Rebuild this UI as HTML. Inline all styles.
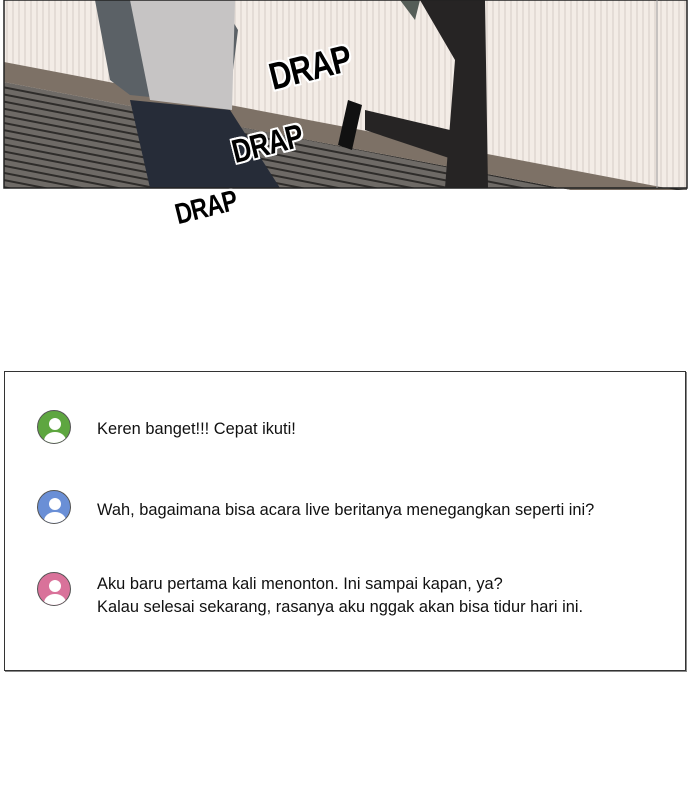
<!DOCTYPE html>
<html><head><meta charset="utf-8"><style>
body{margin:0;width:690px;height:812px;background:#fff;position:relative;overflow:hidden;font-family:"Liberation Sans",sans-serif}
.box{position:absolute;left:4px;top:371px;width:680px;height:298px;border:1.5px solid #333;box-shadow:1px 1px 0 #888}
.av{position:absolute;left:37px;width:34px;height:34px;border-radius:50%;overflow:hidden;border:1px solid #555;box-sizing:border-box}
.t{position:absolute;left:97px;font-size:17px;color:#111;white-space:nowrap;transform-origin:0 0;transform:scaleX(0.965);line-height:23px}
.drap{position:absolute;font-family:"Liberation Sans",sans-serif;font-weight:bold;color:#000;text-shadow:2px 0 #fff,-2px 0 #fff,0 2px #fff,0 -2px #fff,2px 2px #fff,-2px -2px #fff,2px -2px #fff,-2px 2px #fff;transform-origin:0 0;letter-spacing:-1px}
</style></head><body>
<svg style="position:absolute;left:0;top:0" width="690" height="190">
<defs><pattern id="st" width="6" height="10" patternUnits="userSpaceOnUse"><rect width="6" height="10" fill="#f3ece6"/><rect width="2" height="10" fill="#e4dcd6"/></pattern>
<pattern id="fl" width="20" height="7" patternUnits="userSpaceOnUse" patternTransform="rotate(11)"><rect width="20" height="7" fill="#6e6a66"/><rect width="20" height="2" fill="#2e2c2a"/></pattern></defs>
<rect x="4" y="0" width="683" height="188" fill="url(#st)"/>
<polygon points="4,82 687,212 687,188 4,188" fill="url(#fl)"/>
<polygon points="4,62 687,192 687,212 4,82" fill="#7d7166"/>
<path d="M95 0 L220 0 L238 30 L228 110 L180 100 L130 95 L110 80 Z" fill="#5b6166"/>
<path d="M130 0 L235 0 L232 110 L150 100 Z" fill="#c6c4c4"/>
<path d="M130 100 L230 110 L280 188 L150 188 Z" fill="#262c38"/>
<path d="M420 0 L485 0 L488 188 L445 188 L455 60 Z" fill="#262424"/>
<path d="M365 110 L450 130 L455 160 L365 130 Z" fill="#262424"/>
<path d="M348 100 L362 105 L352 150 L338 145 Z" fill="#111"/>
<path d="M400 0 L415 20 L420 0 Z" fill="#555d57"/>
<rect x="4" y="0" width="683" height="188" fill="none" stroke="#222" stroke-width="1.5"/>
<line x1="657" y1="0" x2="657" y2="188" stroke="#999"/>
</svg>
<div class="drap" style="left:265px;top:58px;transform:rotate(-14deg) scaleX(.8);font-size:38px">DRAP</div>
<div class="drap" style="left:228px;top:134px;transform:rotate(-14deg) scaleX(.8);font-size:33px">DRAP</div>
<div class="drap" style="left:172px;top:200px;transform:rotate(-14deg) scaleX(.8);font-size:29px">DRAP</div>

<div class="box"></div>
<div class="av" style="top:410px;background:#5ea640"><svg width="34" height="34"><circle cx="17" cy="13" r="6" fill="#fff"/><ellipse cx="17" cy="30" rx="11" ry="9" fill="#fff"/></svg></div>
<div class="av" style="top:490px;background:#6a8fd6"><svg width="34" height="34"><circle cx="17" cy="13" r="6" fill="#fff"/><ellipse cx="17" cy="30" rx="11" ry="9" fill="#fff"/></svg></div>
<div class="av" style="top:572px;background:#d9729a"><svg width="34" height="34"><circle cx="17" cy="13" r="6" fill="#fff"/><ellipse cx="17" cy="30" rx="11" ry="9" fill="#fff"/></svg></div>
<div class="t" style="top:417px">Keren banget!!! Cepat ikuti!</div>
<div class="t" style="top:498px">Wah, bagaimana bisa acara live beritanya menegangkan seperti ini?</div>
<div class="t" style="top:572px">Aku baru pertama kali menonton. Ini sampai kapan, ya?<br>Kalau selesai sekarang, rasanya aku nggak akan bisa tidur hari ini.</div>
</body></html>
